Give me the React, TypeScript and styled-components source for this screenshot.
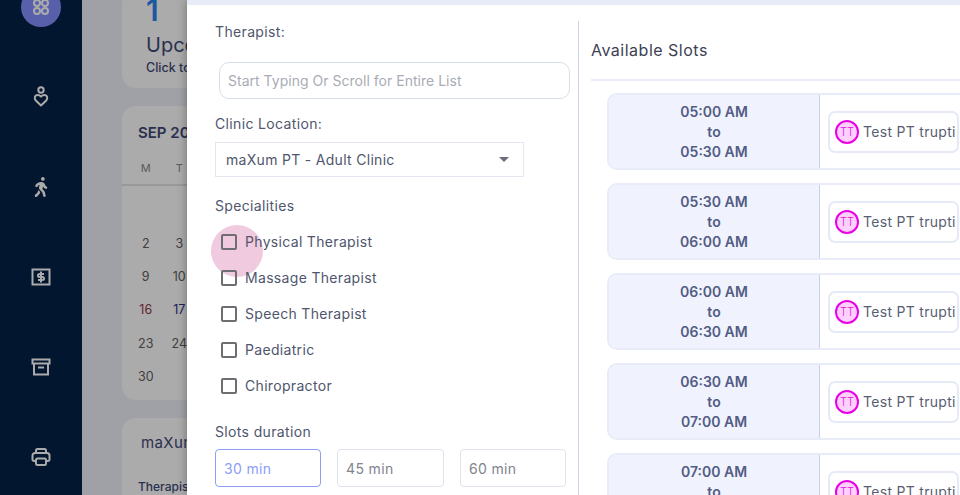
import React from 'react';
import styled, { createGlobalStyle } from 'styled-components';
import { FaWalking } from 'react-icons/fa';

const GlobalStyle = createGlobalStyle`
  html, body { margin: 0; padding: 0; height: 100%; overflow: hidden; }
  body { font-family: Inter, "Noto Sans", sans-serif; background: #eef0f8; }
  * { box-sizing: border-box; }
`;

// ========== Page behind the dialog ==========

const Shell = styled.div`
  position: relative;
  width: 960px;
  height: 495px;
  overflow: hidden;
  display: flex;
  background: #eef0f8;
`;

const Sidebar = styled.nav`
  width: 82px;
  flex: none;
  height: 100%;
  background: #052146;
  display: flex;
  flex-direction: column;
  align-items: center;
`;

const NavList = styled.div`
  margin-top: -38px;
  display: flex;
  flex-direction: column;
`;

const NavItem = styled.div`
  width: 82px;
  height: 90px;
  display: flex;
  align-items: center;
  justify-content: center;
  color: #fff;
`;

const ActiveCircle = styled.div`
  width: 40px;
  height: 40px;
  border-radius: 50%;
  background: #8490ff;
  display: flex;
  align-items: center;
  justify-content: center;
`;

const Main = styled.main`
  flex: 1;
  padding-left: 40px;
  display: flex;
  flex-direction: column;
  gap: 18px;
  margin-top: -12px;
`;

const Card = styled.section`
  width: 320px;
  background: #fff;
  border-radius: 14px;
  flex: none;
`;

const UpcomingCard = styled(Card)`
  height: 100px;
  padding: 0 24px;
`;

const BigNumber = styled.div`
  color: #2a84f0;
  font-size: 30px;
  font-weight: 600;
  line-height: 34px;
  margin-top: 5px;
`;

const UpcomingTitle = styled.div`
  color: #3f4a78;
  font-size: 20px;
  line-height: 28px;
  margin-top: 4px;
`;

const UpcomingHint = styled.div`
  color: #3f4a78;
  font-size: 12.5px;
  font-weight: 500;
  line-height: 18px;
`;

const CalendarCard = styled(Card)`
  height: 294px;
  padding-top: 17px;
`;

const MonthTitle = styled.div`
  color: #3f4a78;
  font-size: 15px;
  font-weight: 600;
  line-height: 20px;
  padding-left: 16px;
`;

const WeekRow = styled.div`
  display: grid;
  grid-template-columns: repeat(7, 33.5px);
  padding: 16px 0 8px 7px;
  border-bottom: 2px solid #e4e4e4;
  height: 43px;
`;

const WeekDay = styled.span`
  color: #888;
  font-size: 11px;
  line-height: 18px;
  text-align: center;
`;

const DateGrid = styled.div`
  display: grid;
  grid-template-columns: repeat(7, 33.5px);
  grid-auto-rows: 33.3px;
  padding: 7.6px 0 0 7px;
`;

const DateCell = styled.span<{ $tone?: string }>`
  color: ${(p) => p.$tone || '#606060'};
  font-size: 12.5px;
  line-height: 33px;
  text-align: center;
`;

const ClinicCard = styled(Card)`
  height: 120px;
  padding: 15px 19px;
`;

const ClinicName = styled.div`
  color: #3f4a78;
  font-size: 15px;
  line-height: 20px;
  letter-spacing: 0.4px;
`;

const ClinicLabel = styled.div`
  color: #3f4a78;
  font-size: 12px;
  font-weight: 500;
  line-height: 18px;
  margin: 25px 0 0 -3px;
`;

const Backdrop = styled.div`
  position: absolute;
  inset: 0;
  background: rgba(0, 0, 0, 0.33);
`;

// ========== Dialog ==========

const Dialog = styled.div`
  position: absolute;
  top: 0;
  bottom: 0;
  left: 187px;
  right: 0;
  background: #fff;
  border-top: 5px solid #e8ecf8;
  box-shadow: 0 0 9px rgba(0, 0, 0, 0.35);
  display: grid;
  grid-template-columns: 392px 1fr;
  overflow: hidden;
`;

const FormColumn = styled.div`
  margin-top: 16px;
  padding-left: 28px;
  border-right: 1px solid #cdd3e6;
`;

const FieldLabel = styled.div`
  color: #4f566e;
  font-size: 14px;
  letter-spacing: 0.35px;
  line-height: 22px;
`;

const TherapistLabel = styled(FieldLabel)`
  margin-bottom: 19px;
`;

const TextInput = styled.input`
  display: block;
  width: 351px;
  height: 37px;
  margin: 0 0 14px 4px;
  padding: 0 8px;
  border: 1px solid #d9deeb;
  border-radius: 10px;
  background: #fff;
  font: 14px Inter, sans-serif;
  letter-spacing: 0.02px;
  outline: none;

  &::placeholder {
    color: #a9acb5;
    opacity: 1;
  }
`;

const SelectBox = styled.div`
  width: 309px;
  height: 35px;
  margin: 7px 0 18px;
  padding: 0 14px 0 10px;
  border: 1px solid #e4e7f0;
  display: flex;
  align-items: center;
  justify-content: space-between;
  color: #4f566e;
  font-size: 14px;
  letter-spacing: 0.3px;
`;

const Caret = styled.span`
  width: 0;
  height: 0;
  border-left: 5px solid transparent;
  border-right: 5px solid transparent;
  border-top: 5px solid #6b6f7a;
`;

const CheckList = styled.div`
  margin-top: 7px;
  display: flex;
  flex-direction: column;
`;

const CheckRow = styled.label`
  position: relative;
  height: 36px;
  padding-left: 6px;
  display: flex;
  align-items: center;
  gap: 8px;
  color: #4f566e;
  font-size: 14px;
  letter-spacing: 0.32px;
`;

const Ripple = styled.span`
  position: absolute;
  left: -4px;
  top: 1px;
  width: 52px;
  height: 52px;
  border-radius: 50%;
  background: rgba(220, 130, 180, 0.42);
`;

const CheckBox = styled.span`
  position: relative;
  width: 16px;
  height: 16px;
  border: 2px solid #6d6d72;
  border-radius: 2px;
  flex: none;
`;

const CheckText = styled.span`
  position: relative;
  padding-bottom: 2px;
`;

const DurationLabel = styled(FieldLabel)`
  margin: 17px 0 6px;
`;

const DurationRow = styled.div`
  display: grid;
  grid-template-columns: 106px 107px 106px;
  gap: 16px;
`;

const DurationButton = styled.div<{ $active?: boolean }>`
  height: 38px;
  padding-left: 8px;
  display: flex;
  align-items: center;
  border: 1px solid ${(p) => (p.$active ? '#8c9dfa' : '#dfe3ee')};
  border-radius: 4px;
  color: ${(p) => (p.$active ? '#8c9dfa' : '#80848f')};
  font-size: 14px;
  letter-spacing: 0.35px;
`;

const SlotsColumn = styled.div`
  padding-left: 12px;
  min-width: 0;
`;

const SlotsTitle = styled.h2`
  margin: 0;
  height: 76px;
  padding-top: 33px;
  border-bottom: 2px solid #e8ecf8;
  color: #3c4154;
  font-size: 16px;
  font-weight: 400;
  letter-spacing: 0.5px;
  line-height: 24px;
`;

const SlotList = styled.div`
  padding: 12px 0 0 16px;
  display: flex;
  flex-direction: column;
  gap: 13px;
`;

const SlotCard = styled.div`
  width: 420px;
  height: 77px;
  flex: none;
  display: flex;
  border: 2px solid #e8ecf8;
  border-radius: 10px;
  overflow: hidden;
`;

const SlotTime = styled.div`
  width: 211px;
  flex: none;
  background: #f0f3fd;
  border-right: 1px solid #c8d0e8;
  color: #535c84;
  font-size: 14px;
  font-weight: 600;
  line-height: 20px;
  text-align: center;
  display: flex;
  flex-direction: column;
  justify-content: center;
`;

const SlotBody = styled.div`
  padding-left: 8px;
  display: flex;
  align-items: center;
`;

const TherapistChip = styled.div`
  width: 131px;
  height: 42px;
  padding-left: 5px;
  display: flex;
  align-items: center;
  gap: 4px;
  border: 2px solid #e6e9f6;
  border-radius: 7px;
  color: #585e72;
  font-size: 14px;
  letter-spacing: 0.3px;
  white-space: nowrap;
`;

const Avatar = styled.span`
  width: 24px;
  height: 24px;
  flex: none;
  border: 2px solid #ea00e6;
  border-radius: 50%;
  background: #fdd0fd;
  color: #e812e4;
  font-size: 11px;
  font-weight: 300;
  letter-spacing: 0;
  display: flex;
  align-items: center;
  justify-content: center;
`;

// ========== Icons ==========

const iconProps = {
  fill: 'none',
  stroke: 'currentColor',
  strokeWidth: 1.8,
  strokeLinecap: 'round' as const,
  strokeLinejoin: 'round' as const,
};

const GridIcon = () => (
  <svg width="18" height="18" viewBox="0 0 18 18" {...iconProps} strokeWidth={2}>
    <circle cx="5" cy="5" r="3" />
    <circle cx="13" cy="5" r="3" />
    <circle cx="5" cy="13" r="3" />
    <circle cx="13" cy="13" r="3" />
  </svg>
);

const HeartPersonIcon = () => (
  <svg width="16" height="22" viewBox="0 0 16 22" {...iconProps} strokeWidth={2}>
    <circle cx="8" cy="4" r="2.7" />
    <path d="M8 19.500l-5.200-4.900c-2-2-1-5.600 1.900-5.600 1.500 0 2.500.7 3.300 1.600.8-.9 1.800-1.600 3.300-1.600 2.900 0 3.900 3.600 1.900 5.600z" />
  </svg>
);

const MoneyBoxIcon = () => (
  <svg width="20" height="18" viewBox="0 0 20 18" {...iconProps} strokeWidth={2} strokeLinecap="butt" strokeLinejoin="miter">
    <rect x="1.500" y="1.500" width="17" height="15" />
    <path d="M13 6H8.500a1.500 1.500 0 0 0 0 3h3a1.500 1.500 0 0 1 0 3H7M10 3.500v11" />
  </svg>
);

const ArchiveIcon = () => (
  <svg width="20" height="18" viewBox="0 0 20 18" {...iconProps} strokeWidth={2} strokeLinecap="butt" strokeLinejoin="miter">
    <rect x="1.500" y="1.500" width="17" height="4" />
    <path d="M3 5.500v11h14v-11M7 9.500h6" />
  </svg>
);

const PrinterIcon = () => (
  <svg width="20" height="20" viewBox="0 0 20 20" {...iconProps} strokeWidth={2}>
    <path d="M5 14H3a1.500 1.500 0 0 1-1.500-1.500v-4A2.500 2.500 0 0 1 4 6h12a2.500 2.500 0 0 1 2.500 2.500v4A1.500 1.500 0 0 1 17 14h-2" />
    <path d="M5 6V3.500A1.500 1.500 0 0 1 6.500 2h7A1.500 1.500 0 0 1 15 3.500V6" />
    <rect x="5" y="11.500" width="10" height="6.500" rx="1.500" />
  </svg>
);

// ========== Data ==========

const WEEK_DAYS = ['M', 'T', 'W', 'T', 'F', 'S', 'S'];
const SEPTEMBER: (number | null)[] = [null, null, null, null, null, null, 1];
for (let day = 2; day <= 30; day++) SEPTEMBER.push(day);

const SPECIALITIES = ['Physical Therapist', 'Massage Therapist', 'Speech Therapist', 'Paediatric', 'Chiropractor'];
const DURATIONS = ['30 min', '45 min', '60 min'];
const SLOTS = [
  ['05:00 AM', '05:30 AM'],
  ['05:30 AM', '06:00 AM'],
  ['06:00 AM', '06:30 AM'],
  ['06:30 AM', '07:00 AM'],
  ['07:00 AM', '07:30 AM'],
];

const dateTone = (day: number | null) => {
  if (day === 16) return '#90384a';
  if (day === 17) return '#30308a';
  return undefined;
};

// ========== Page ==========

export default function App() {
  return (
    <Shell>
      <GlobalStyle />
      <Sidebar>
        <NavList>
          <NavItem>
            <ActiveCircle>
              <GridIcon />
            </ActiveCircle>
          </NavItem>
          <NavItem>
            <HeartPersonIcon />
          </NavItem>
          <NavItem>
            <FaWalking size={20} />
          </NavItem>
          <NavItem>
            <MoneyBoxIcon />
          </NavItem>
          <NavItem>
            <ArchiveIcon />
          </NavItem>
          <NavItem>
            <PrinterIcon />
          </NavItem>
        </NavList>
      </Sidebar>

      <Main>
        <UpcomingCard>
          <BigNumber>1</BigNumber>
          <UpcomingTitle>Upcoming</UpcomingTitle>
          <UpcomingHint>Click to view</UpcomingHint>
        </UpcomingCard>
        <CalendarCard>
          <MonthTitle>SEP 2024</MonthTitle>
          <WeekRow>
            {WEEK_DAYS.map((day, i) => (
              <WeekDay key={i}>{day}</WeekDay>
            ))}
          </WeekRow>
          <DateGrid>
            {SEPTEMBER.map((day, i) => (
              <DateCell key={i} $tone={dateTone(day)}>
                {day}
              </DateCell>
            ))}
          </DateGrid>
        </CalendarCard>
        <ClinicCard>
          <ClinicName>maXum PT</ClinicName>
          <ClinicLabel>Therapist</ClinicLabel>
        </ClinicCard>
      </Main>

      <Backdrop />

      <Dialog>
        <FormColumn>
          <TherapistLabel>Therapist:</TherapistLabel>
          <TextInput placeholder="Start Typing Or Scroll for Entire List" />
          <FieldLabel>Clinic Location:</FieldLabel>
          <SelectBox>
            maXum PT - Adult Clinic
            <Caret />
          </SelectBox>
          <FieldLabel>Specialities</FieldLabel>
          <CheckList>
            {SPECIALITIES.map((name, i) => (
              <CheckRow key={name}>
                {i === 0 && <Ripple />}
                <CheckBox />
                <CheckText>{name}</CheckText>
              </CheckRow>
            ))}
          </CheckList>
          <DurationLabel>Slots duration</DurationLabel>
          <DurationRow>
            {DURATIONS.map((label, i) => (
              <DurationButton key={label} $active={i === 0}>
                {label}
              </DurationButton>
            ))}
          </DurationRow>
        </FormColumn>

        <SlotsColumn>
          <SlotsTitle>Available Slots</SlotsTitle>
          <SlotList>
            {SLOTS.map(([from, to]) => (
              <SlotCard key={from}>
                <SlotTime>
                  <span>{from}</span>
                  <span>to</span>
                  <span>{to}</span>
                </SlotTime>
                <SlotBody>
                  <TherapistChip>
                    <Avatar>TT</Avatar>
                    Test PT trupti
                  </TherapistChip>
                </SlotBody>
              </SlotCard>
            ))}
          </SlotList>
        </SlotsColumn>
      </Dialog>
    </Shell>
  );
}
